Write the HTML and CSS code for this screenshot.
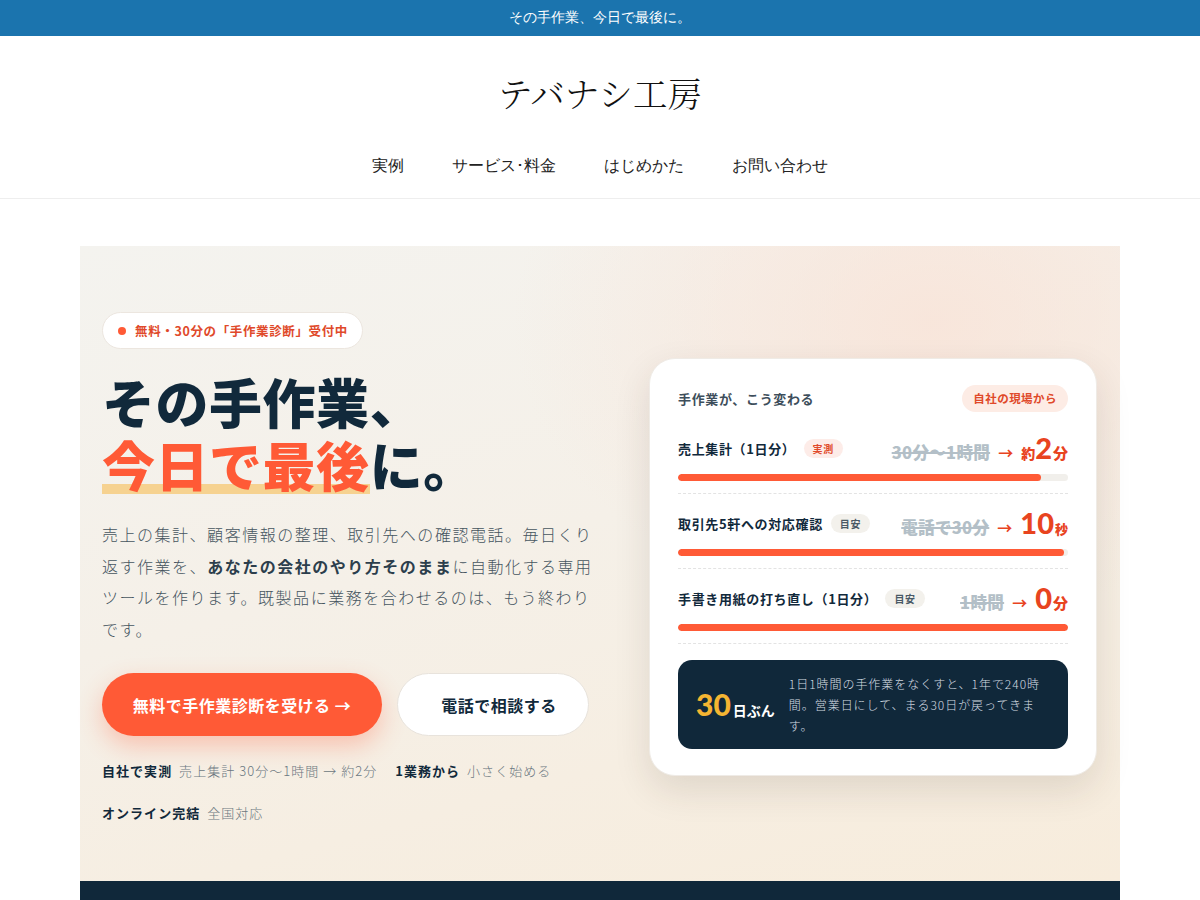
FILE: index.html
```html
<!DOCTYPE html>
<html lang="ja">
<head>
<meta charset="utf-8">
<title>テバナシ工房</title>
<link rel="stylesheet" href="styles.css">
</head>
<body>
<div class="topbar">その手作業、今日で最後に。</div>
<header class="site-header">
  <div class="logo">テバナシ工房</div>
  <nav class="nav">
    <a href="#">実例</a>
    <a href="#">サービス･料金</a>
    <a href="#">はじめかた</a>
    <a href="#">お問い合わせ</a>
  </nav>
</header>
<main>
  <section class="hero">
    <div class="hero-left">
      <div class="badge"><span class="dot"></span>無料・30分の「手作業診断」受付中</div>
      <h1 class="headline">その手作業、<br><span class="hl">今日で最後</span>に。</h1>
      <p class="lead">売上の集計、顧客情報の整理、取引先への確認電話。毎日くり返す作業を、<strong>あなたの会社のやり方そのまま</strong>に自動化する専用ツールを作ります。既製品に業務を合わせるのは、もう終わりです。</p>
      <div class="actions">
        <a class="btn btn-primary" href="#">無料で手作業診断を受ける →</a>
        <a class="btn btn-secondary" href="#">電話で相談する</a>
      </div>
      <ul class="facts">
        <li><b>自社で実測</b> 売上集計 30分〜1時間 → 約2分</li>
        <li><b>1業務から</b> 小さく始める</li>
        <li><b>オンライン完結</b> 全国対応</li>
      </ul>
    </div>
    <div class="hero-right">
      <div class="card">
        <div class="card-head">
          <span class="card-title">手作業が、こう変わる</span>
          <span class="card-pill">自社の現場から</span>
        </div>
        <div class="row">
          <div class="row-top">
            <span class="label">売上集計（1日分）<span class="tag tag-red">実測</span></span>
            <span class="result"><s>30分〜1時間</s><span class="arrow">→</span><span class="approx">約</span><span class="num">2</span><span class="unit">分</span></span>
          </div>
          <div class="bar"><div class="fill" style="width:93%"></div></div>
        </div>
        <div class="row">
          <div class="row-top">
            <span class="label">取引先5軒への対応確認<span class="tag">目安</span></span>
            <span class="result"><s>電話で30分</s><span class="arrow">→</span><span class="num">10</span><span class="unit sm">秒</span></span>
          </div>
          <div class="bar"><div class="fill" style="width:99%"></div></div>
        </div>
        <div class="row">
          <div class="row-top">
            <span class="label">手書き用紙の打ち直し（1日分）<span class="tag">目安</span></span>
            <span class="result"><s>1時間</s><span class="arrow">→</span><span class="num">0</span><span class="unit">分</span></span>
          </div>
          <div class="bar"><div class="fill" style="width:100%"></div></div>
        </div>
        <div class="summary">
          <div class="sum-big"><span class="sum-num">30</span><span class="sum-unit">日ぶん</span></div>
          <p class="sum-text">1日1時間の手作業をなくすと、1年で240時間。営業日にして、まる30日が戻ってきます。</p>
        </div>
      </div>
    </div>
  </section>
  <section class="next"></section>
</main>
</body>
</html>
```
FILE: styles.css
```css
* { box-sizing: border-box; }
html, body { margin: 0; padding: 0; }
body {
  background: #ffffff;
  color: #11293b;
  font-family: "Noto Sans CJK JP", sans-serif;
}
a { text-decoration: none; color: inherit; }

.topbar {
  height: 36px;
  background: #1b74ae;
  color: #ffffff;
  font-family: sans-serif;
  font-size: 14px;
  display: flex;
  align-items: center;
  justify-content: center;
}

.site-header {
  border-bottom: 1px solid #eeeeee;
  height: 163px;
  display: flex;
  flex-direction: column;
  align-items: center;
}
.logo {
  font-family: "Noto Serif CJK JP", "IPAMincho", "Noto Sans CJK JP", serif;
  font-weight: 300;
  font-size: 34.5px;
  color: #111111;
  margin-top: 34px;
  line-height: 44px;
}
.nav {
  display: flex;
  gap: 48px;
  margin-top: 40px;
}
.nav a {
  font-family: sans-serif;
  font-size: 16px;
  color: #222222;
  line-height: 24px;
}

main { padding-top: 47px; }

.hero {
  width: 1040px;
  margin: 0 auto;
  height: 635px;
  padding: 4px 23px 0 22px;
  display: grid;
  grid-template-columns: 492px 448px;
  justify-content: space-between;
  align-items: center;
  background:
    radial-gradient(ellipse 420px 300px at 82% 12%, rgba(249, 226, 214, 0.75), rgba(249, 226, 214, 0) 100%),
    linear-gradient(165deg, #f4f3ef 0%, #f5f0e8 45%, #f7ecdc 100%);
}

.hero-left { padding-top: 4px; }
.hero-right { padding-top: 2px; }

.badge {
  display: inline-flex;
  align-items: center;
  height: 37px;
  padding: 0 14px 0 15px;
  background: #ffffff;
  border: 1px solid #ece6df;
  border-radius: 20px;
  color: #e0492a;
  font-size: 12.5px;
  font-weight: 700;
  letter-spacing: 0.05em;
}
.dot {
  width: 8px;
  height: 8px;
  border-radius: 50%;
  background: #ff5a36;
  margin-right: 9px;
}

.headline {
  margin: 21px 0 0;
  font-size: 53px;
  font-weight: 900;
  line-height: 63px;
  letter-spacing: 0.01em;
  color: #11293b;
}
.hl {
  color: #ff5a36;
  background: linear-gradient(transparent 76%, #f6d290 76%, #f6d290 90%, transparent 90%);
}

.lead {
  margin: 23px 0 0;
  font-size: 16px;
  line-height: 31.5px;
  letter-spacing: 0.095em;
  color: #46555f;
  font-weight: 300;
}
.lead strong { color: #2c3e4c; font-weight: 700; }

.actions {
  display: flex;
  gap: 15px;
  margin-top: 28px;
}
.btn {
  height: 63px;
  border-radius: 32px;
  display: inline-flex;
  align-items: center;
  justify-content: center;
  font-size: 16px;
  font-weight: 700;
  letter-spacing: 0.03em;
}
.btn-primary {
  width: 280px;
  background: #ff5a36;
  color: #ffffff;
  box-shadow: 0 10px 24px rgba(255, 90, 54, 0.30);
}
.btn-secondary {
  width: 192px;
  background: #ffffff;
  color: #11293b;
  border: 1px solid #e8e3dc;
  padding-left: 12px;
}

.facts {
  list-style: none;
  margin: 24px 0 0;
  padding: 0;
  display: flex;
  flex-wrap: wrap;
  column-gap: 18px;
  row-gap: 21px;
  font-size: 13px;
  line-height: 21px;
  color: #6b7780;
  letter-spacing: 0.08em;
  font-weight: 300;
}
.facts b { color: #11293b; font-weight: 700; margin-right: 3px; }

.card {
  background: #ffffff;
  border-radius: 26px;
  padding: 26px 28px 26px;
  box-shadow: 0 14px 36px rgba(60, 45, 30, 0.12);
  border: 1px solid #efebe6;
}
.card-head {
  display: flex;
  justify-content: space-between;
  align-items: center;
  margin-bottom: 8px;
}
.card-title {
  font-size: 13px;
  font-weight: 700;
  color: #3d4e5b;
  letter-spacing: 0.05em;
}
.card-pill {
  background: #fdece5;
  color: #e0492a;
  font-size: 11.5px;
  font-weight: 700;
  height: 27px;
  padding: 0 11px;
  border-radius: 14px;
  display: inline-flex;
  align-items: center;
  letter-spacing: 0.04em;
}

.row {
  padding: 14px 0 12px;
  border-bottom: 1px dashed #e3e3e3;
}
.row + .row { padding-top: 15px; }
.row-top {
  display: flex;
  justify-content: space-between;
  align-items: center;
  height: 30px;
}
.label {
  font-size: 13px;
  font-weight: 700;
  color: #11293b;
  display: inline-flex;
  align-items: center;
  letter-spacing: 0.05em;
}
.tag {
  margin-left: 8px;
  font-size: 10px;
  font-weight: 700;
  color: #4a5966;
  background: #f3f1ec;
  border-radius: 10px;
  padding: 2px 9px;
  line-height: 15px;
}
.tag-red { background: #fdece8; color: #e0492a; }
.result {
  display: inline-flex;
  align-items: baseline;
  color: #e8441f;
  font-weight: 900;
}
.result s {
  color: #b3bfc7;
  font-size: 16.5px;
  font-weight: 900;
  letter-spacing: 0.02em;
  text-decoration-thickness: 2px;
}
.arrow {
  font-size: 15px;
  margin: 0 8px;
  color: #e8441f;
  font-weight: 700;
}
.approx { font-size: 14px; }
.num {
  font-family: "Lato", "Noto Sans CJK JP", sans-serif;
  font-size: 29px;
  font-weight: 900;
  line-height: 30px;
}
.unit { font-size: 15px; margin-left: 1px; }
.unit.sm { font-size: 13px; }

.bar {
  margin-top: 10px;
  height: 7px;
  border-radius: 4px;
  background: #f1efeb;
  overflow: hidden;
}
.fill {
  height: 100%;
  background: #ff5a36;
  border-radius: 4px;
}

.summary {
  margin-top: 16px;
  background: #10283a;
  border-radius: 14px;
  min-height: 86px;
  padding: 13px 18px 13px 18px;
  display: flex;
  align-items: center;
  gap: 14px;
}
.sum-big {
  display: flex;
  align-items: baseline;
  white-space: nowrap;
}
.sum-num {
  font-family: "Lato", "Noto Sans CJK JP", sans-serif;
  font-size: 30px;
  font-weight: 900;
  color: #f5b532;
}
.sum-unit {
  color: #ffffff;
  font-size: 14px;
  font-weight: 700;
  margin-left: 2px;
}
.sum-text {
  margin: 0;
  font-size: 12px;
  line-height: 21px;
  color: #d5dde3;
  letter-spacing: 0.08em;
  font-weight: 300;
}

.next {
  width: 1040px;
  margin: 0 auto;
  height: 120px;
  background: #10283a;
}
```
